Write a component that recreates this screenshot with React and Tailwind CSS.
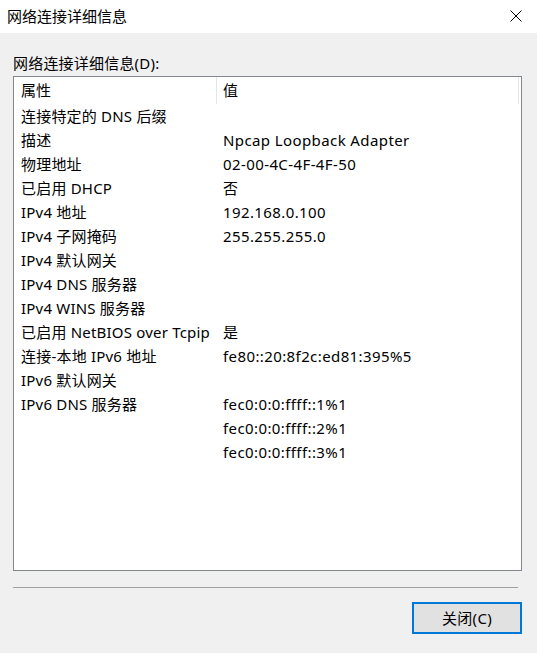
import React from "react";

const rows = [
  ["连接特定的 DNS 后缀", ""],
  ["描述", "Npcap Loopback Adapter"],
  ["物理地址", "02-00-4C-4F-4F-50"],
  ["已启用 DHCP", "否"],
  ["IPv4 地址", "192.168.0.100"],
  ["IPv4 子网掩码", "255.255.255.0"],
  ["IPv4 默认网关", ""],
  ["IPv4 DNS 服务器", ""],
  ["IPv4 WINS 服务器", ""],
  ["已启用 NetBIOS over Tcpip", "是"],
  ["连接-本地 IPv6 地址", "fe80::20:8f2c:ed81:395%5"],
  ["IPv6 默认网关", ""],
  ["IPv6 DNS 服务器", "fec0:0:0:ffff::1%1"],
  ["", "fec0:0:0:ffff::2%1"],
  ["", "fec0:0:0:ffff::3%1"],
];

const font = { fontFamily: '"Noto Sans", "Noto Sans CJK SC", sans-serif' };

export default function App() {
  return (
    <div className="w-[537px] h-[653px] flex flex-col bg-[#f0f0f0] text-[15px] text-black" style={font}>
      {/* title bar */}
      <div className="h-[33px] bg-white flex items-center justify-between pl-[7px] pr-[15px]">
        <span className="leading-none">网络连接详细信息</span>
        <svg width="12" height="12" viewBox="0 0 12 12" className="mt-[-2px]">
          <path d="M0.5 0.5 L11.5 11.5 M11.5 0.5 L0.5 11.5" stroke="#000" strokeWidth="1" fill="none" />
        </svg>
      </div>

      <div className="flex-1 flex flex-col px-[13px]">
        <div className="mt-[20px] h-[23px] leading-[20px] tracking-[0.2px]">网络连接详细信息(D):</div>

        {/* list view */}
        <div className="w-[509px] h-[495px] border border-[#828790] bg-white flex flex-col">
          <div className="h-[27px] flex">
            <div className="w-[203px] h-[27px] pl-[7px] flex items-center border-r border-[#e5e5e5]">属性</div>
            <div className="w-[302px] h-[27px] pl-[6px] flex items-center border-r border-[#e5e5e5]">值</div>
          </div>
          {rows.map((r, i) => (
            <div key={i} className="h-[24px] flex items-center">
              <div className="w-[203px] pl-[7px] whitespace-nowrap tracking-[0.2px]">{r[0]}</div>
              <div className="pl-[6px] whitespace-nowrap tracking-[0.4px]">{r[1]}</div>
            </div>
          ))}
        </div>

        <div className="mt-[16px] w-[505px] h-px bg-[#a0a0a0]" />

        <div className="mt-[14px] flex justify-end pr-[2px]">
          <button className="w-[110px] h-[32px] border-2 border-[#0078d7] bg-[#e1e1e1] flex items-center justify-center leading-none tracking-[0.3px]">
            关闭(C)
          </button>
        </div>
      </div>
    </div>
  );
}
